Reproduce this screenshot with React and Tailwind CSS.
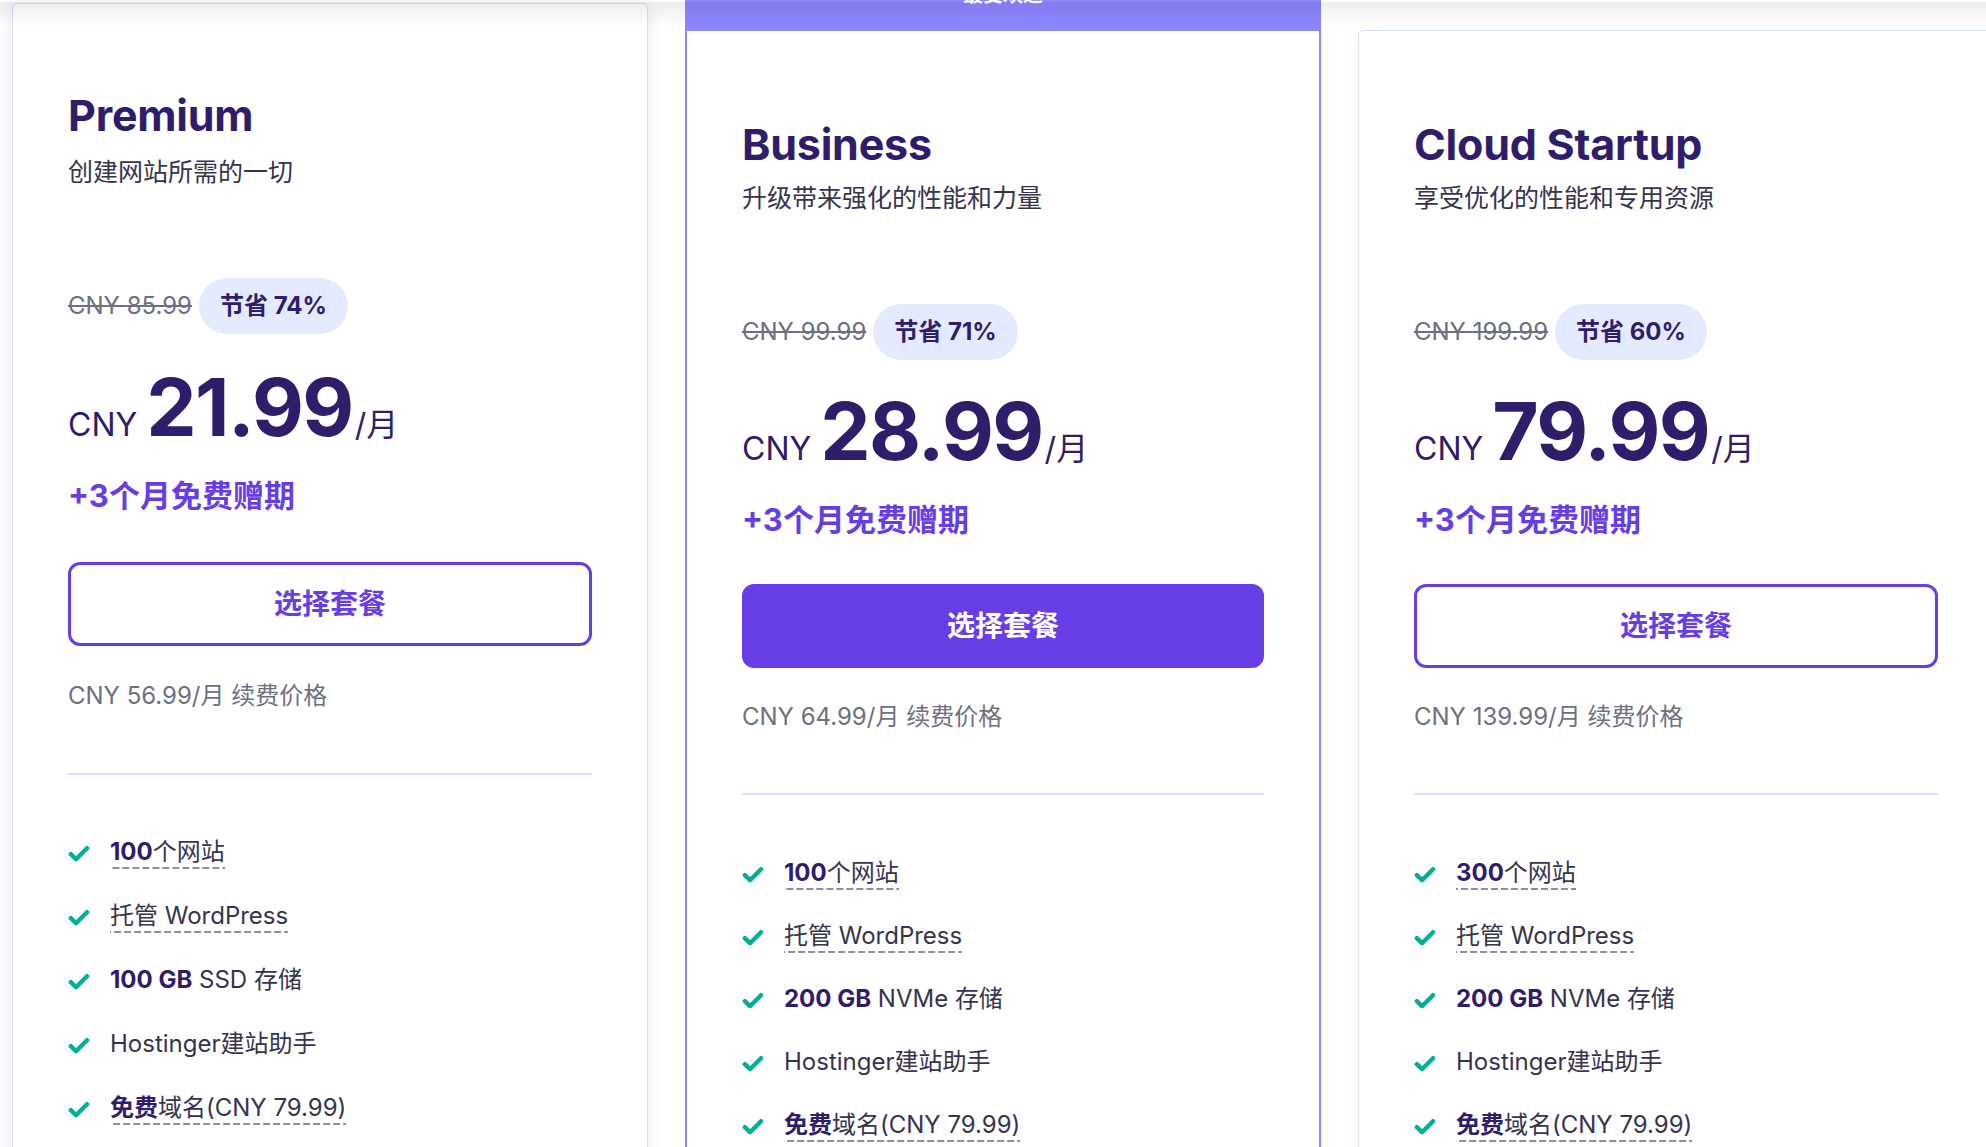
import React from "react";

const S1 = {
  pt: "pt-[85px]",
  sub: "mt-[15px]",
  badge: "mt-[90px]",
  price: "mt-[33px]",
  bonus: "mt-[29px]",
  btn: "mt-[46px]",
  renew: "mt-[34px]",
  div: "mt-[61px]",
  feat: "mt-[63px]",
  gap: "gap-[33px]",
};
const S2 = {
  pt: "pt-[87px]",
  sub: "mt-[12px]",
  badge: "mt-[90px]",
  price: "mt-[31px]",
  bonus: "mt-[29px]",
  btn: "mt-[44px]",
  renew: "mt-[33px]",
  div: "mt-[60px]",
  feat: "mt-[64px]",
  gap: "gap-[32px]",
};

function Check() {
  return (
    <svg width="22" height="18" viewBox="0 0 22 18" className="shrink-0">
      <polyline
        points="2.8,9.2 8,14.2 19,3.2"
        fill="none"
        stroke="#00b090"
        strokeWidth="4.4"
        strokeLinecap="round"
        strokeLinejoin="round"
      />
    </svg>
  );
}

function Feature({ bold, rest, dashed }) {
  return (
    <li className="flex items-center gap-[20px]">
      <Check />
      <span
        className={
          dashed
            ? "inline-block pb-[3px] leading-[28px] bg-[linear-gradient(to_right,#8e8ea0_70%,transparent_70%)] bg-[length:10px_2px] bg-repeat-x bg-bottom"
            : "inline-block pb-[3px] leading-[28px]"
        }
      >
        {bold && <b className="font-bold text-[#2f1c6a]">{bold}</b>}
        {rest}
      </span>
    </li>
  );
}

function CardBody({ s, p }) {
  return (
    <div className={s.pt}>
      <h2 className="text-[43px] leading-[52px] font-bold text-[#2f1c6a] tracking-[-0.005em]">
        {p.name}
      </h2>
      <p className={`${s.sub} text-[25px] leading-[32px] text-[#36344d]`}>{p.desc}</p>
      <div className={`${s.badge} flex items-center gap-[7px]`}>
        <span className="text-[24px] text-[#6d7081] line-through">CNY {p.old}</span>
        <span className="h-[56px] px-[21px] rounded-full bg-[#e5ebff] flex items-center text-[24px] font-bold text-[#2f1c6a]">
          节省 {p.save}
        </span>
      </div>
      <div className={`${s.price} flex items-baseline text-[#2f1c6a]`}>
        <span className="text-[32px] leading-none">CNY</span>
        <span className="ml-[9px] text-[80px] leading-none font-bold tracking-[-0.02em]">
          {p.price}
        </span>
        <span className="ml-[2px] text-[32px] leading-none">/月</span>
      </div>
      <div className={`${s.bonus} text-[31px] leading-[40px] font-bold text-[#673de6]`}>
        +3个月免费赠期
      </div>
      <button
        className={
          p.filled
            ? `${s.btn} h-[84px] w-full rounded-[12px] border-[3px] border-[#673de6] bg-[#673de6] text-white text-[28px] font-bold flex items-center justify-center`
            : `${s.btn} h-[84px] w-full rounded-[12px] border-[3px] border-[#673de6] bg-white text-[#673de6] text-[28px] font-bold flex items-center justify-center`
        }
      >
        选择套餐
      </button>
      <p className={`${s.renew} text-[24px] leading-[32px] text-[#6d7081]`}>
        CNY {p.renew}/月 续费价格
      </p>
      <div className={`${s.div} h-[2px] bg-[#d5dfff]`} />
      <ul className={`${s.feat} ${s.gap} flex flex-col text-[24px] text-[#36344d]`}>
        <Feature bold={p.sites} rest="个网站" dashed />
        <Feature rest="托管 WordPress" dashed />
        <Feature bold={p.disk} rest={p.diskRest} />
        <Feature rest="Hostinger建站助手" />
        <Feature bold="免费" rest="域名(CNY 79.99)" dashed />
      </ul>
    </div>
  );
}

const plans = [
  {
    name: "Premium",
    desc: "创建网站所需的一切",
    old: "85.99",
    save: "74%",
    price: "21.99",
    renew: "56.99",
    sites: "100",
    disk: "100 GB",
    diskRest: " SSD 存储",
  },
  {
    name: "Business",
    desc: "升级带来强化的性能和力量",
    old: "99.99",
    save: "71%",
    price: "28.99",
    renew: "64.99",
    sites: "100",
    disk: "200 GB",
    diskRest: " NVMe 存储",
    filled: true,
  },
  {
    name: "Cloud Startup",
    desc: "享受优化的性能和专用资源",
    old: "199.99",
    save: "60%",
    price: "79.99",
    renew: "139.99",
    sites: "300",
    disk: "200 GB",
    diskRest: " NVMe 存储",
  },
];

export default function App() {
  return (
    <div className="relative w-[1986px] h-[1147px] overflow-hidden bg-white font-['Inter','Noto_Sans_CJK_SC',sans-serif]">
      <div className="pointer-events-none absolute inset-x-0 top-[2px] z-10 h-[26px] bg-linear-to-b from-black/[0.07] to-transparent" />
      <div className="flex items-start gap-[37px] pl-[12px]">
        <div className="mt-[3px] w-[636px] shrink-0 rounded-[6px] border border-[#d5dfff] bg-white px-[55px] pb-[80px] shadow-[0_0_16px_rgba(0,0,0,0.09)]">
          <CardBody s={S1} p={plans[0]} />
        </div>
        <div className="-mt-[29px] w-[636px] shrink-0 flex flex-col">
          <div className="h-[60px] rounded-t-[6px] bg-[#8c85ff] flex justify-center pt-[12px] text-white text-[20px] leading-[24px] font-bold">
            最受欢迎
          </div>
          <div className="border-x-2 border-b-2 border-[#8c85ff] bg-white px-[55px] pb-[80px]">
            <CardBody s={S2} p={plans[1]} />
          </div>
        </div>
        <div className="mt-[30px] w-[636px] shrink-0 rounded-[6px] border border-[#d5dfff] bg-white px-[55px] pb-[80px]">
          <CardBody s={S2} p={plans[2]} />
        </div>
      </div>
    </div>
  );
}
